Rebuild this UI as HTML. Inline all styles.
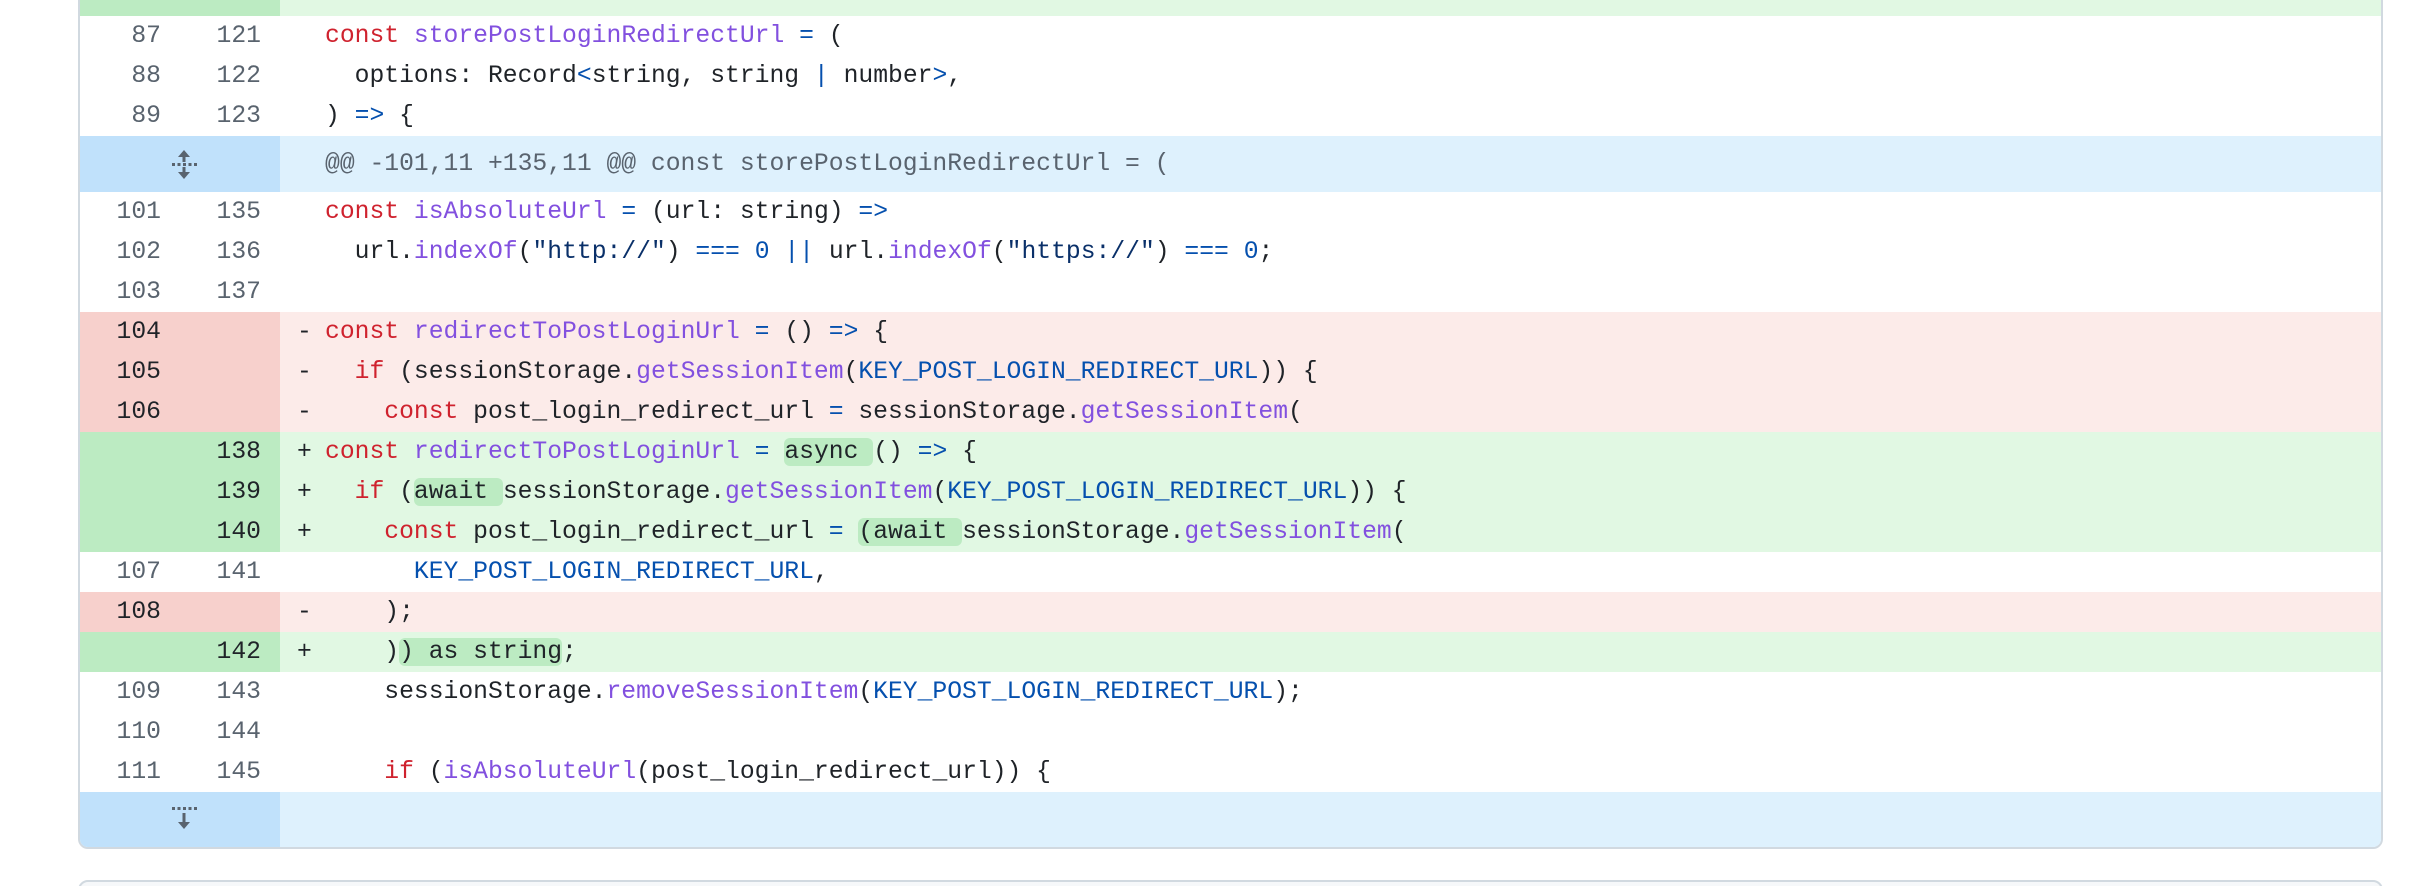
<!DOCTYPE html>
<html><head><meta charset="utf-8"><style>
html,body{margin:0;padding:0;background:#fff;width:2410px;height:886px;overflow:hidden;position:relative}
.box{position:absolute;left:78px;top:-20px;width:2301px;height:865px;border:2px solid #d1d9e0;border-radius:10px;overflow:hidden;background:#fff}
.box2{position:absolute;left:78px;top:880px;width:2301px;height:40px;border:2px solid #d1d9e0;border-radius:10px;background:#f6f8fa}
.r{position:absolute;left:0;width:2301px;height:40px;font-family:"Liberation Mono",monospace;font-size:24.7px;line-height:40px;color:#1f2328;white-space:pre}
.g{position:absolute;left:0;top:0;width:200px;height:100%}
.o,.n{position:absolute;top:0;text-align:right;color:#59636e}
.o{left:0;width:81px}.n{left:100px;width:81px}
.s{position:absolute;left:217px;top:0}
.c{position:absolute;left:245px;top:0}
.del{background:#fcebe9}.del .g{background:#f7d0cc}.del .o,.del .n{color:#1f2328}
.add{background:#e1f8e3}.add .g{background:#bcebc2}.add .o,.add .n{color:#1f2328}
.hk{background:#def1fd;height:56px;line-height:56px}.hk .g{background:#c0e1fb}
.k{color:#cf222e}.f{color:#8250df}.b{color:#0550ae}.st{color:#0a3069}
.h{background:#bcebc2;border-radius:6px}
</style></head><body>
<div class="box">
<div class="r add" style="top:-6px"><div class="g"><span class="n" style="top:-20px">120</span></div><span class="s">+</span></div>
<div class="r" style="top:34px"><div class="g"><span class="o">87</span><span class="n">121</span></div><span class="c"><span class="k">const</span> <span class="f">storePostLoginRedirectUrl</span> <span class="b">=</span> (</span></div>
<div class="r" style="top:74px"><div class="g"><span class="o">88</span><span class="n">122</span></div><span class="c">  options: Record<span class="b">&lt;</span>string, string <span class="b">|</span> number<span class="b">&gt;</span>,</span></div>
<div class="r" style="top:114px"><div class="g"><span class="o">89</span><span class="n">123</span></div><span class="c">) <span class="b">=&gt;</span> {</span></div>
<div class="r hk" style="top:154px"><div class="g"><svg style="position:absolute;left:89px;top:12px" width="30" height="32" viewBox="0 0 30 32" fill="#59636e"><path d="M15 2 L21 9 H9 Z"/><rect x="13.5" y="8" width="3" height="6"/><rect x="3" y="15" width="3" height="3"/><rect x="8.5" y="15" width="3" height="3"/><rect x="14" y="15" width="3" height="3"/><rect x="19.5" y="15" width="3" height="3"/><rect x="25" y="15" width="3" height="3"/><rect x="13.5" y="19" width="3" height="6"/><path d="M15 31 L21 24 H9 Z"/></svg></div><span class="c" style="color:#59636e">@@ -101,11 +135,11 @@ const storePostLoginRedirectUrl = (</span></div>
<div class="r" style="top:210px"><div class="g"><span class="o">101</span><span class="n">135</span></div><span class="c"><span class="k">const</span> <span class="f">isAbsoluteUrl</span> <span class="b">=</span> (url: string) <span class="b">=&gt;</span></span></div>
<div class="r" style="top:250px"><div class="g"><span class="o">102</span><span class="n">136</span></div><span class="c">  url.<span class="f">indexOf</span>(<span class="st">"http://"</span>) <span class="b">===</span> <span class="b">0</span> <span class="b">||</span> url.<span class="f">indexOf</span>(<span class="st">"https://"</span>) <span class="b">===</span> <span class="b">0</span>;</span></div>
<div class="r" style="top:290px"><div class="g"><span class="o">103</span><span class="n">137</span></div></div>
<div class="r del" style="top:330px"><div class="g"><span class="o">104</span></div><span class="s">-</span><span class="c"><span class="k">const</span> <span class="f">redirectToPostLoginUrl</span> <span class="b">=</span> () <span class="b">=&gt;</span> {</span></div>
<div class="r del" style="top:370px"><div class="g"><span class="o">105</span></div><span class="s">-</span><span class="c">  <span class="k">if</span> (sessionStorage.<span class="f">getSessionItem</span>(<span class="b">KEY_POST_LOGIN_REDIRECT_URL</span>)) {</span></div>
<div class="r del" style="top:410px"><div class="g"><span class="o">106</span></div><span class="s">-</span><span class="c">    <span class="k">const</span> post_login_redirect_url <span class="b">=</span> sessionStorage.<span class="f">getSessionItem</span>(</span></div>
<div class="r add" style="top:450px"><div class="g"><span class="n">138</span></div><span class="s">+</span><span class="c"><span class="k">const</span> <span class="f">redirectToPostLoginUrl</span> <span class="b">=</span> <span class="h">async </span>() <span class="b">=&gt;</span> {</span></div>
<div class="r add" style="top:490px"><div class="g"><span class="n">139</span></div><span class="s">+</span><span class="c">  <span class="k">if</span> (<span class="h">await </span>sessionStorage.<span class="f">getSessionItem</span>(<span class="b">KEY_POST_LOGIN_REDIRECT_URL</span>)) {</span></div>
<div class="r add" style="top:530px"><div class="g"><span class="n">140</span></div><span class="s">+</span><span class="c">    <span class="k">const</span> post_login_redirect_url <span class="b">=</span> <span class="h">(await </span>sessionStorage.<span class="f">getSessionItem</span>(</span></div>
<div class="r" style="top:570px"><div class="g"><span class="o">107</span><span class="n">141</span></div><span class="c">      <span class="b">KEY_POST_LOGIN_REDIRECT_URL</span>,</span></div>
<div class="r del" style="top:610px"><div class="g"><span class="o">108</span></div><span class="s">-</span><span class="c">    );</span></div>
<div class="r add" style="top:650px"><div class="g"><span class="n">142</span></div><span class="s">+</span><span class="c">    )<span class="h">) as string</span>;</span></div>
<div class="r" style="top:690px"><div class="g"><span class="o">109</span><span class="n">143</span></div><span class="c">    sessionStorage.<span class="f">removeSessionItem</span>(<span class="b">KEY_POST_LOGIN_REDIRECT_URL</span>);</span></div>
<div class="r" style="top:730px"><div class="g"><span class="o">110</span><span class="n">144</span></div></div>
<div class="r" style="top:770px"><div class="g"><span class="o">111</span><span class="n">145</span></div><span class="c">    <span class="k">if</span> (<span class="f">isAbsoluteUrl</span>(post_login_redirect_url)) {</span></div>
<div class="r hk" style="top:810px"><div class="g"><svg style="position:absolute;left:89px;top:12px" width="30" height="32" viewBox="0 0 30 32" fill="#59636e"><rect x="3" y="3" width="3" height="3"/><rect x="8.5" y="3" width="3" height="3"/><rect x="14" y="3" width="3" height="3"/><rect x="19.5" y="3" width="3" height="3"/><rect x="25" y="3" width="3" height="3"/><rect x="13.5" y="9" width="3" height="10"/><path d="M15 25 L21 18 H9 Z"/></svg></div></div>
</div>
<div class="box2"></div>
</body></html>
